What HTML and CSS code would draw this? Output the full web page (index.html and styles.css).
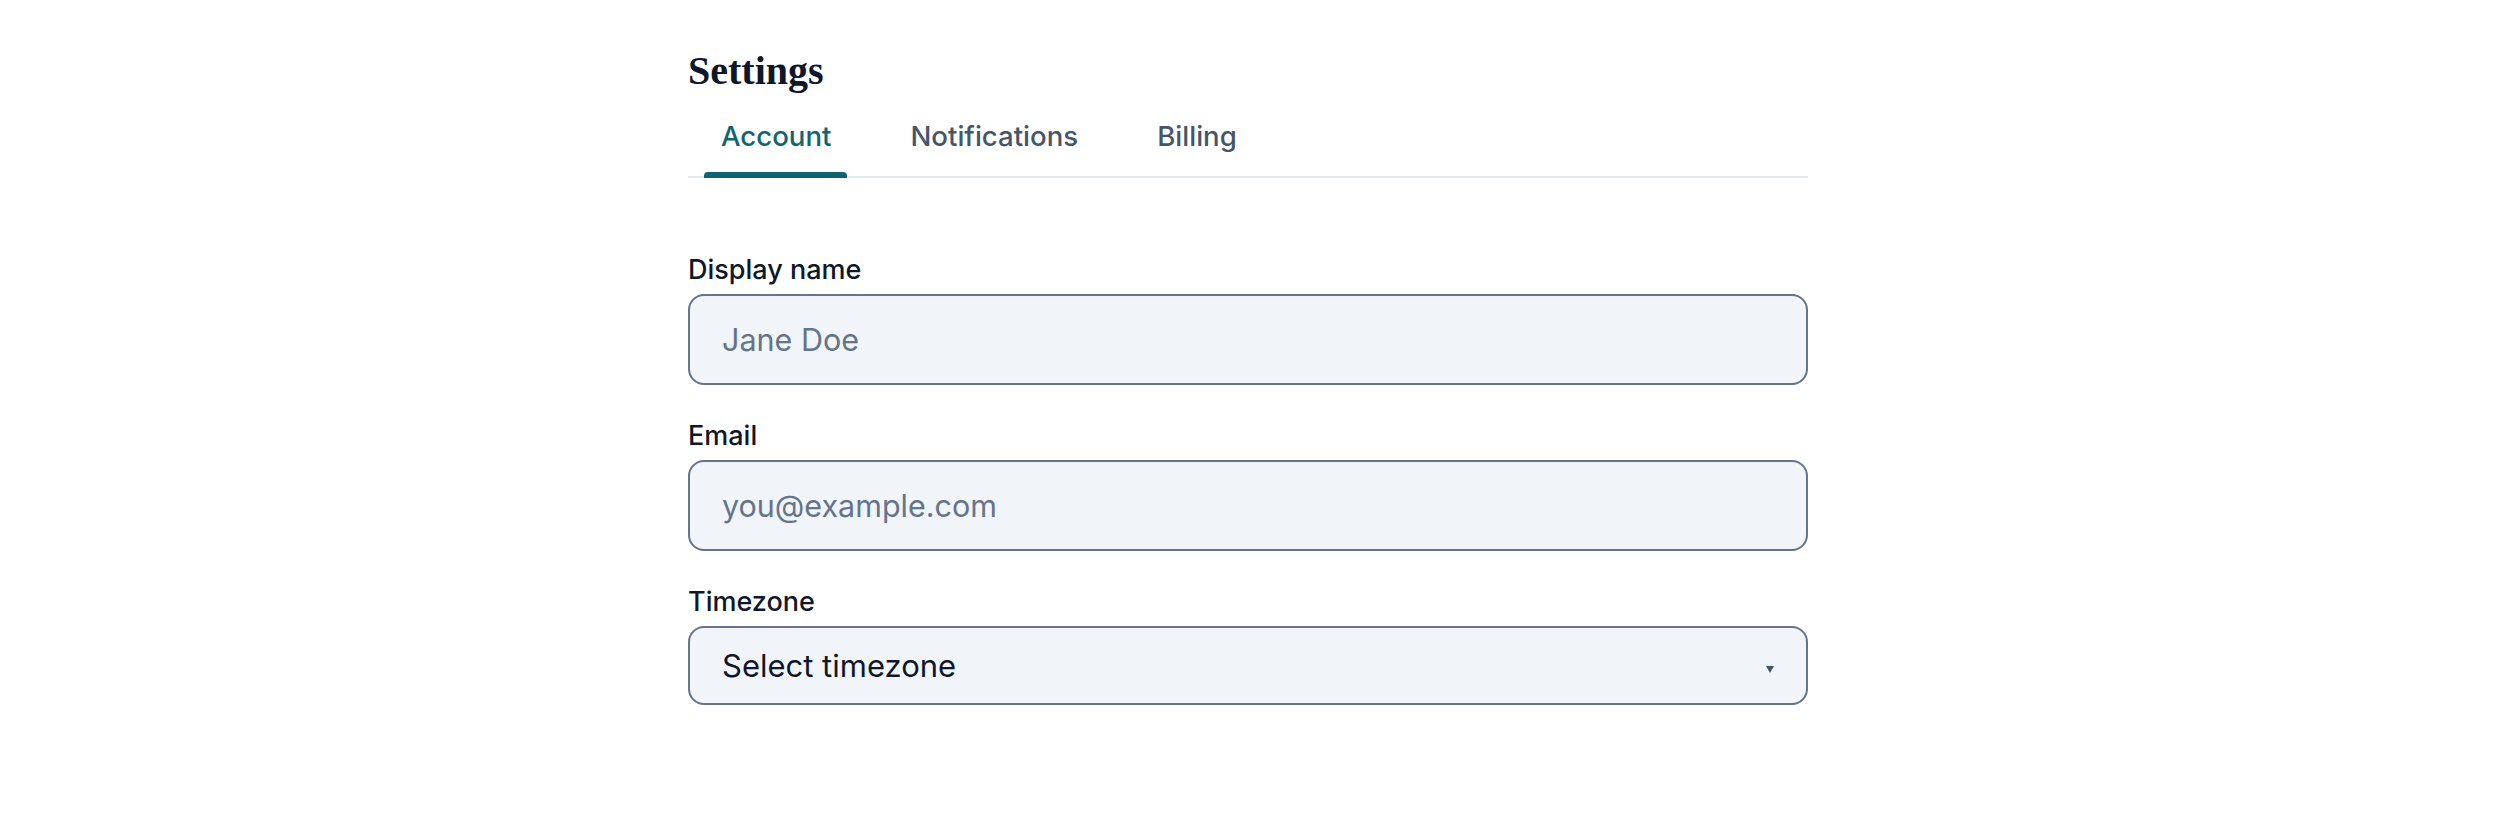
FILE: index.html
```html
<!DOCTYPE html>
<html lang="en">
<head>
<meta charset="utf-8">
<title>Settings</title>
<link rel="stylesheet" href="styles.css">
</head>
<body>
<main class="page">
  <h1 class="title">Settings</h1>
  <nav class="tabs">
    <a class="tab active">Account</a>
    <a class="tab">Notifications</a>
    <a class="tab">Billing</a>
  </nav>
  <form class="form">
    <div class="field">
      <label class="label" for="name">Display name</label>
      <input class="input" id="name" type="text" placeholder="Jane Doe">
    </div>
    <div class="field">
      <label class="label" for="email">Email</label>
      <input class="input" id="email" type="email" placeholder="you@example.com">
    </div>
    <div class="field">
      <label class="label" for="tz">Timezone</label>
      <div class="select-wrap">
        <select class="select" id="tz">
          <option>Select timezone</option>
        </select>
        <svg class="caret" width="8" height="7" viewBox="0 0 8 7"><polygon points="0,0 8,0 4,7" fill="#475569"/></svg>
      </div>
    </div>
  </form>
</main>
</body>
</html>
```
FILE: styles.css
```css
html, body {
  margin: 0;
  background: #ffffff;
}

.page {
  width: 1120px;
  margin: 0 auto;
  padding-top: 47px;
  font-family: Inter, "Noto Sans", sans-serif;
}

.title {
  margin: 0;
  font-family: "Liberation Serif", "Times New Roman", serif;
  font-weight: 700;
  font-size: 40px;
  line-height: 48px;
  color: #0f172a;
}

.tabs {
  display: flex;
  gap: 13px;
  margin-top: 9px;
  border-bottom: 2px solid #e2e8f0;
}

.tab {
  position: relative;
  padding: 12px 33px 20px;
  font-size: 27.6px;
  font-weight: 500;
  line-height: 40px;
  color: #475569;
  cursor: pointer;
}

.tab.active {
  color: #0f6570;
}

.tab.active::after {
  content: "";
  position: absolute;
  left: 16px;
  right: 17px;
  bottom: -2px;
  height: 6px;
  background: #0e6470;
  border-radius: 4px 4px 0 0;
}

.form {
  display: flex;
  flex-direction: column;
  gap: 33px;
  margin-top: 74px;
}

.field {
  display: flex;
  flex-direction: column;
}

.label {
  display: block;
  margin-bottom: 6px;
  font-size: 27px;
  font-weight: 500;
  line-height: 36px;
  color: #0f172a;
}

.input {
  box-sizing: border-box;
  width: 100%;
  height: 91px;
  margin: 0;
  padding: 25px 32px;
  font-family: Inter, "Noto Sans", sans-serif;
  font-size: 30.5px;
  line-height: 37px;
  color: #0f172a;
  background: #f1f5f9;
  border: 2px solid #64748b;
  border-radius: 16px;
  outline: none;
}

.input::placeholder {
  color: #64748b;
  opacity: 1;
}

.select-wrap {
  position: relative;
}

.select {
  box-sizing: border-box;
  display: block;
  width: 100%;
  height: 79px;
  margin: 0;
  padding: 0 32px;
  font-family: Inter, "Noto Sans", sans-serif;
  font-size: 31px;
  color: #0f172a;
  background: #f1f5f9;
  border: 2px solid #64748b;
  border-radius: 16px;
  -webkit-appearance: none;
  appearance: none;
  outline: none;
}

.caret {
  position: absolute;
  right: 34px;
  top: 50%;
  margin-top: 0;
  pointer-events: none;
}
```
